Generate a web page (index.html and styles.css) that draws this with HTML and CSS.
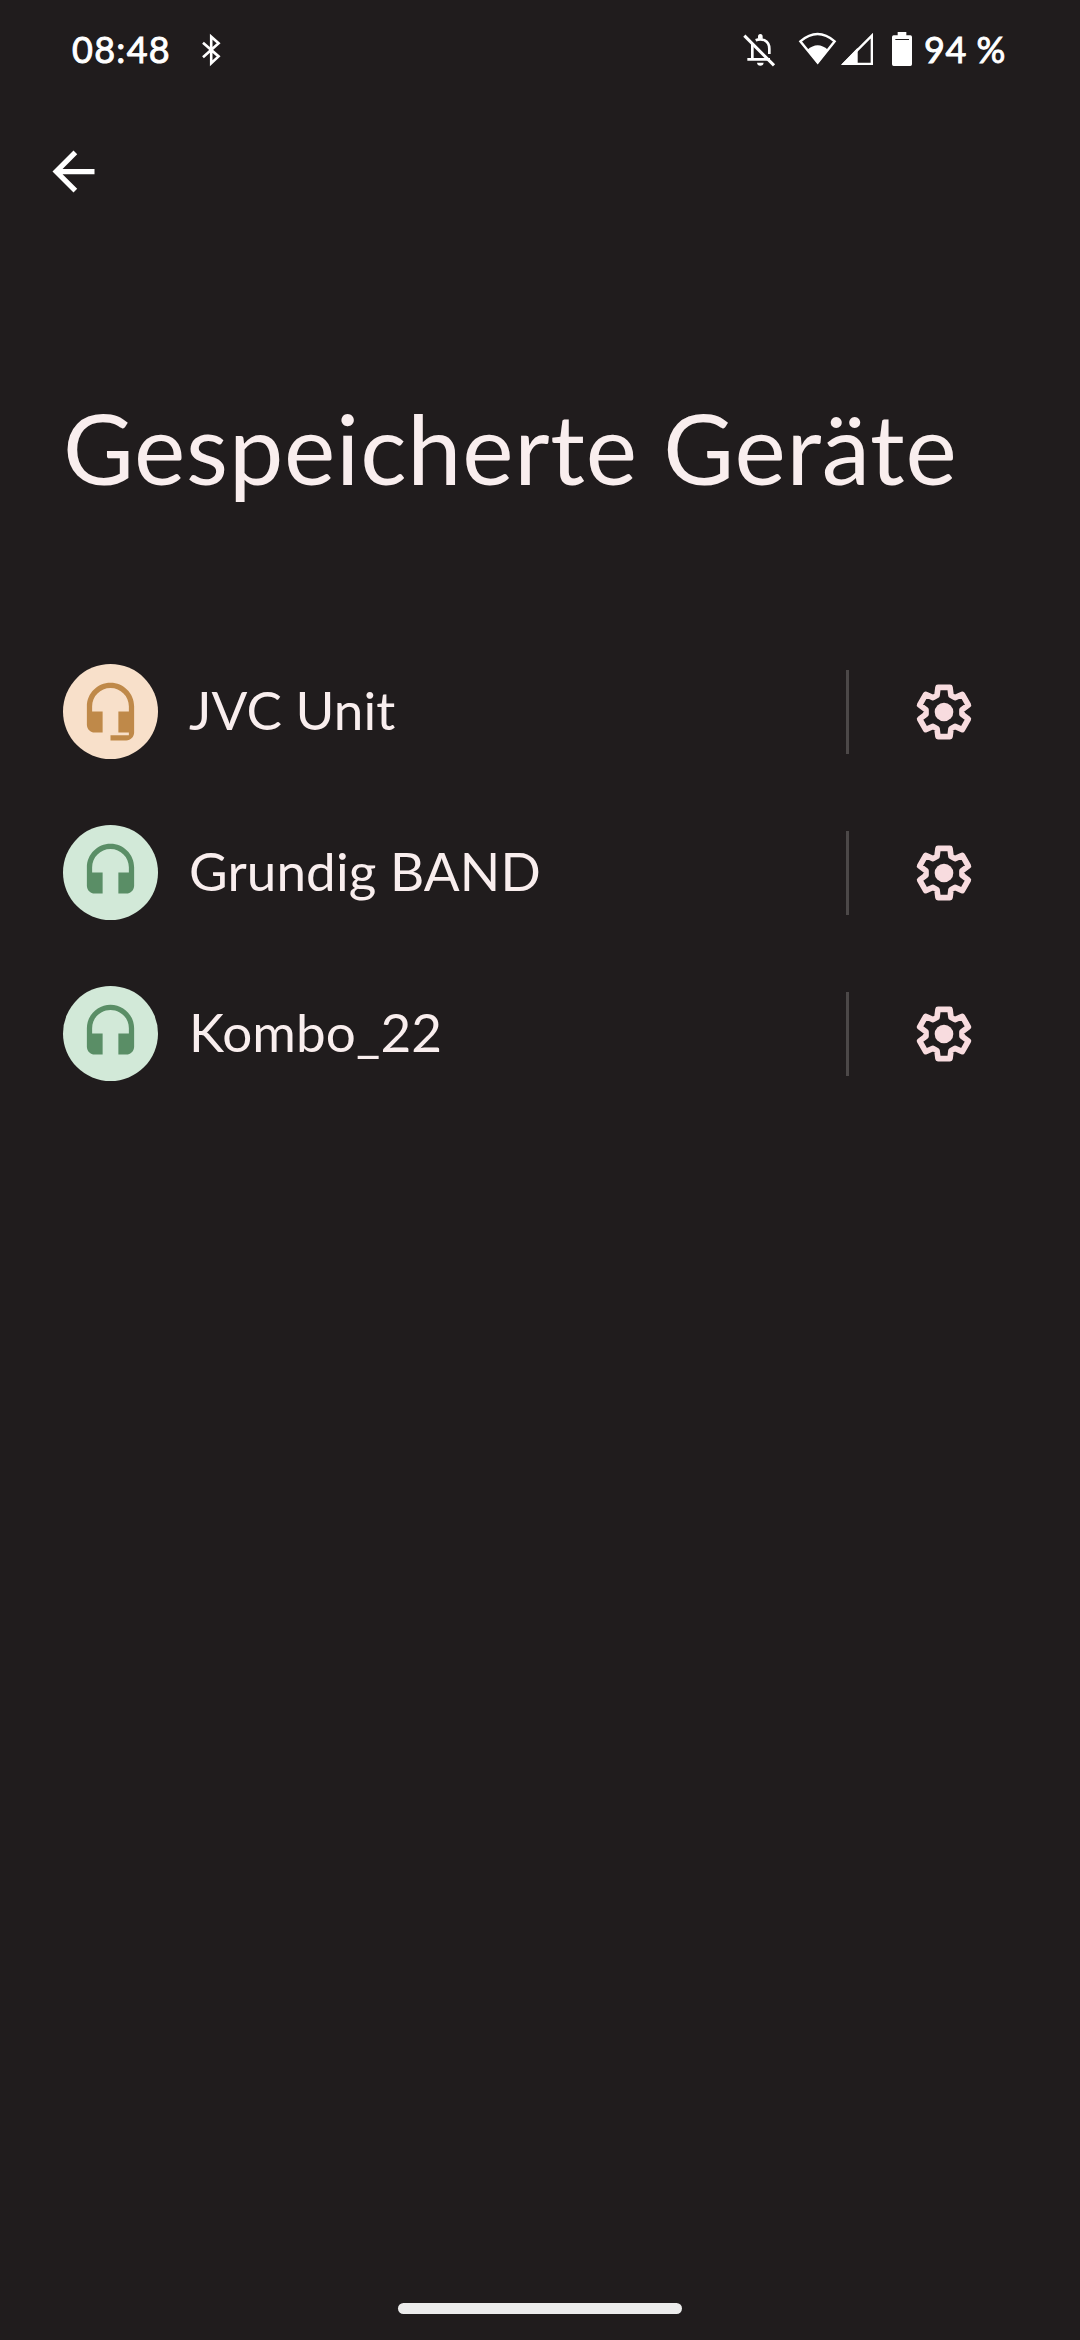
FILE: index.html
```html
<!DOCTYPE html>
<html lang="de">
<head>
<meta charset="utf-8">
<title>Gespeicherte Geräte</title>
<link rel="stylesheet" href="styles.css">
</head>
<body>
<svg class="symbols" aria-hidden="true">
  <symbol id="gear" viewBox="-90 -90 180 180">
    <path d="M-18-74H18L21-50L33-43L55-53L73-21L54-7V7L73 21L55 53L33 43L21 50L18 74H-18L-21 50L-33 43L-55 53L-73 21L-54 7V-7L-73-21L-55-53L-33-43L-21-50Z" fill="none" stroke="currentColor" stroke-width="17" stroke-linejoin="round"/>
    <circle r="28" fill="currentColor"/>
  </symbol>
  <symbol id="headset" viewBox="0 0 24 24">
    <path fill="currentColor" d="M12 1c-4.97 0-9 4.03-9 9v7c0 1.66 1.34 3 3 3h3v-8H5v-2c0-3.87 3.13-7 7-7s7 3.13 7 7v2h-4v8h3c1.66 0 3-1.34 3-3v-7c0-4.97-4.03-9-9-9z"/>
  </symbol>
</svg>
<header class="status">
  <span class="clock">08:48</span>
  <svg class="bluetooth" viewBox="0 0 20 36"><path d="M2 10.7 17.6 24.4 10.2 31.3V4.7L17.6 11.2 2 25.2"/></svg>
  <svg class="tray" viewBox="0 0 540 240">
    <g fill="none" stroke="#fff" stroke-width="8">
      <path d="M97 101V148M82 148H150M107 91Q121 85 134 91Q148 98 148 116V132"/>
      <path d="M73 77 162 166" stroke-width="9"/>
      <path d="M241 94Q293 50 344 94L293 158Z" stroke-width="7"/>
      <path d="M371 161.500H455.500V77Z" stroke-width="7"/>
    </g>
    <g fill="#fff">
      <path d="M114 86V80Q114 72 121 72T128 80V86ZM111 158H131Q130 167 121 167T111 158Z"/>
      <path d="M262 119Q293 92 324 119L293 162Z"/>
      <path d="M413 113V163H365Z"/>
      <path fill-rule="evenodd" d="M533 66H559V76H571Q576 76 576 81V163Q576 168 571 168H521Q516 168 516 163V81Q516 76 521 76H533ZM526 87V90H567V87Z"/>
    </g>
  </svg>
  <span class="charge">94 %</span>
</header>
<nav class="toolbar">
  <svg class="back" viewBox="0 0 24 24"><path fill="#fff" d="M20 11H7.830l5.590-5.590L12 4l-8 8 8 8 1.410-1.410L7.830 13H20v-2z"/></svg>
</nav>
<h1 class="title">Gespeicherte Geräte</h1>
<main class="devices">
  <div class="device">
    <span class="avatar orange"><svg class="glyph" viewBox="0 0 24 24"><path fill="currentColor" d="M12 1c-4.970 0-9 4.030-9 9v7c0 1.660 1.340 3 3 3h3v-8H5v-2c0-3.870 3.130-7 7-7s7 3.130 7 7v2h-4v8h4v1h-7v2h6c1.660 0 3-1.340 3-3V10c0-4.970-4.030-9-9-9z"/></svg></span>
    <span class="name">JVC Unit</span>
    <span class="divider"></span>
    <svg class="gear"><use href="#gear"/></svg>
  </div>
  <div class="device">
    <span class="avatar green"><svg class="glyph"><use href="#headset"/></svg></span>
    <span class="name">Grundig BAND</span>
    <span class="divider"></span>
    <svg class="gear"><use href="#gear"/></svg>
  </div>
  <div class="device">
    <span class="avatar green"><svg class="glyph"><use href="#headset"/></svg></span>
    <span class="name">Kombo_22</span>
    <span class="divider"></span>
    <svg class="gear"><use href="#gear"/></svg>
  </div>
</main>
<footer class="gesture"><span class="handle"></span></footer>
</body>
</html>
```
FILE: styles.css
```css
* { box-sizing: border-box; }
body {
  margin: 0;
  width: 1080px;
  height: 2340px;
  display: flex;
  flex-direction: column;
  overflow: hidden;
  background: #201c1d;
  color: #f9eeee;
  font-family: Lato, "Open Sans", sans-serif;
}
svg { display: block; flex: none; overflow: visible; }
.symbols { width: 0; height: 0; }
.status {
  height: 100px;
  display: flex;
  align-items: flex-start;
  padding-left: 72px;
  color: #fff;
  font-size: 36px;
  line-height: 44px;
  -webkit-text-stroke: 0.9px #fff;
}
.clock { width: 129px; padding-top: 27px; letter-spacing: 1.3px; white-space: nowrap; }
.bluetooth { width: 20px; height: 36px; margin-top: 32px; fill: none; stroke: #fff; stroke-width: 2.6; }
.tray { width: 180px; height: 80px; margin: 10px 0 0 499px; }
.charge { margin: 27px 0 0 24px; letter-spacing: 0.5px; white-space: nowrap; }
.toolbar { height: 143px; padding: 40px 0 0 42px; }
.back { width: 63px; height: 63px; }
.title {
  margin: 0;
  height: 388px;
  padding: 145px 0 0 63px;
  font-size: 97px;
  font-weight: 400;
  line-height: 120px;
  letter-spacing: 0.8px;
  white-space: nowrap;
}
.device { height: 161px; display: flex; align-items: center; padding-left: 63px; }
.avatar {
  width: 95px;
  height: 95px;
  flex: none;
  display: grid;
  place-items: center;
  border-radius: 50%;
}
.orange { background: #f8e0ca; color: #bf8949; }
.green { background: #d2e9d8; color: #5a8e66; }
.glyph { width: 63px; height: 63px; }
.name { width: 657px; margin-left: 31px; padding-bottom: 4px; font-size: 53px; line-height: 64px; letter-spacing: 0.1px; white-space: nowrap; }
.divider { width: 3px; height: 84px; background: #4c4848; }
.gear { width: 60px; height: 60px; margin-left: 64.500px; color: #f8dcdf; }
.gesture { margin-top: auto; padding-bottom: 26px; display: flex; justify-content: center; }
.handle { width: 284px; height: 11px; border-radius: 6px; background: #ececec; }
```
